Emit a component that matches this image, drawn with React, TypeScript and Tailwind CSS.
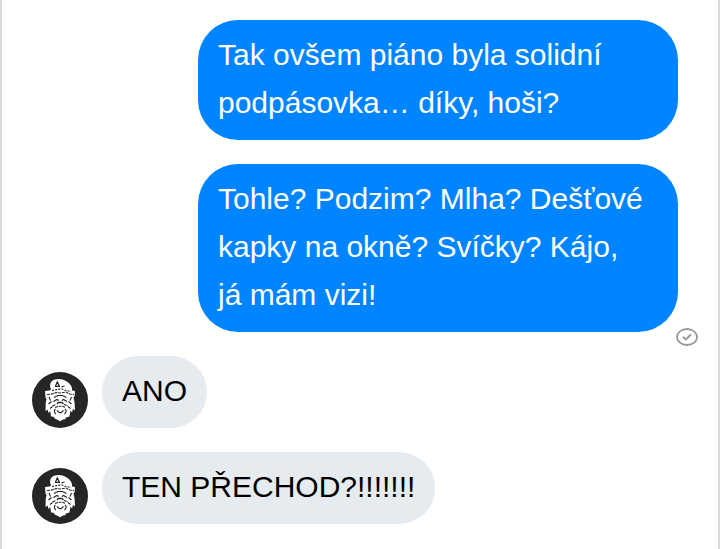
import React from "react";

type Message = {
  id: number;
  text: string;
  sent: boolean;
  delivered?: boolean;
};

const messages: Message[] = [
  { id: 1, text: "Tak ovšem piáno byla solidní podpásovka… díky, hoši?", sent: true },
  {
    id: 2,
    text: "Tohle? Podzim? Mlha? Dešťové kapky na okně? Svíčky? Kájo, já\u00a0mám vizi!",
    sent: true,
    delivered: true,
  },
  { id: 3, text: "ANO", sent: false },
  { id: 4, text: "TEN PŘECHOD?!!!!!!!", sent: false },
];

function Avatar() {
  return (
    <svg viewBox="0 0 56 56" className="size-14 shrink-0" aria-hidden="true">
      <circle cx="28" cy="28" r="28" fill="#262626" />
      {/* beret, hair and beard */}
      <path
        fill="#fff"
        d="M19 17.500L18 14c0-3 1.500-5.500 4-6.300 3-.9 7-1 10 .3 4 1.700 7 4.500 8 8v2.500l3 .5-.3 5-1.200 1.500 1 4.500.5 8.500-2-1.500-1 3.500-1.500-2-1 6-3 .8-1.500 2-2.500.5-2.500 1.400-2.500-1.400-2.500-1-1.500-2-2.500-.3-.8-5.500-1.700 2-1-3.500-2 1.500.2-8 .8-4-1-1.500-.5-6.500 4.500-.5z"
      />
      {/* badge */}
      <path fill="none" stroke="#262626" strokeWidth="1.300" d="M23.500 14l1.800-4 2 4M23 14.300h5M29.500 15l3-1" />
      {/* face lines */}
      <g fill="none" stroke="#262626" strokeWidth="1.100">
        <path strokeDasharray="2 1.200" d="M20 18.500l5-1 5-.5 4 1.500 5 1" />
        <path strokeDasharray="3 .8" d="M15 22.500l5-.5 4-1.500 5 .5 5-1 4 2 4 .5" />
        <path d="M22 25.500l4-2h4.500l4 2M17 25l1.500 3.500M39.500 25l-1.500 3.500" />
        <path d="M16.500 32l3-2.500M39.500 32l-3-2.500M18 36.500l2.500-2M38.500 36.500l-2.500-2" />
        <path strokeWidth="1.300" d="M21.500 29.500l3.500-2 1.500 1M30 28.500l1.500-1 3.500 2M25 32l1.500-1.500h3.500l1.500 1.500" />
        <path strokeDasharray="3 .7" d="M20.500 34l3.500-1.500M32 32.500l4 1.500M23 35.500l3-1.200h4.500l3 1.200" />
        <path d="M23.500 37c-1.800 1.500-1.500 3.500.5 5M33 37c1.800 1.500 1.500 3.500-.5 5M25 38.500l1.500 1.500 1.700.8 1.700-.8 1.600-1.500" />
      </g>
    </svg>
  );
}

function DeliveredIcon() {
  return (
    <svg
      viewBox="0 0 22 18"
      className="absolute -right-5 -bottom-[14px] h-[18px] w-[22px]"
      fill="none"
      stroke="#999"
      role="img"
      aria-label="Doručeno"
    >
      <ellipse cx="11" cy="9" rx="10" ry="8" strokeWidth="1.800" />
      <path d="M6.800 8.800l3 2.700 5.200-5" strokeWidth="2" />
    </svg>
  );
}

function MessageRow({ message }: { message: Message }) {
  if (message.sent) {
    return (
      <li className="flex justify-end pr-10">
        <div className="relative max-w-[480px] rounded-[40px] bg-[#0084ff] px-5 pt-[11px] pb-[13px] text-white">
          <p>{message.text}</p>
          {message.delivered && <DeliveredIcon />}
        </div>
      </li>
    );
  }

  return (
    <li className="flex items-end gap-[14px] pl-[30px]">
      <Avatar />
      <p className="max-w-[480px] rounded-[40px] bg-[#e6ebef] px-5 pt-[11px] pb-[13px] text-black">
        {message.text}
      </p>
    </li>
  );
}

export default function App() {
  return (
    <main className="min-h-screen border-x-2 border-[#dadada] bg-white pt-5 font-['Liberation_Sans',Arial,sans-serif] text-[30px] leading-[48px]">
      <ul className="flex flex-col gap-6">
        {messages.map((message) => (
          <MessageRow key={message.id} message={message} />
        ))}
      </ul>
    </main>
  );
}
